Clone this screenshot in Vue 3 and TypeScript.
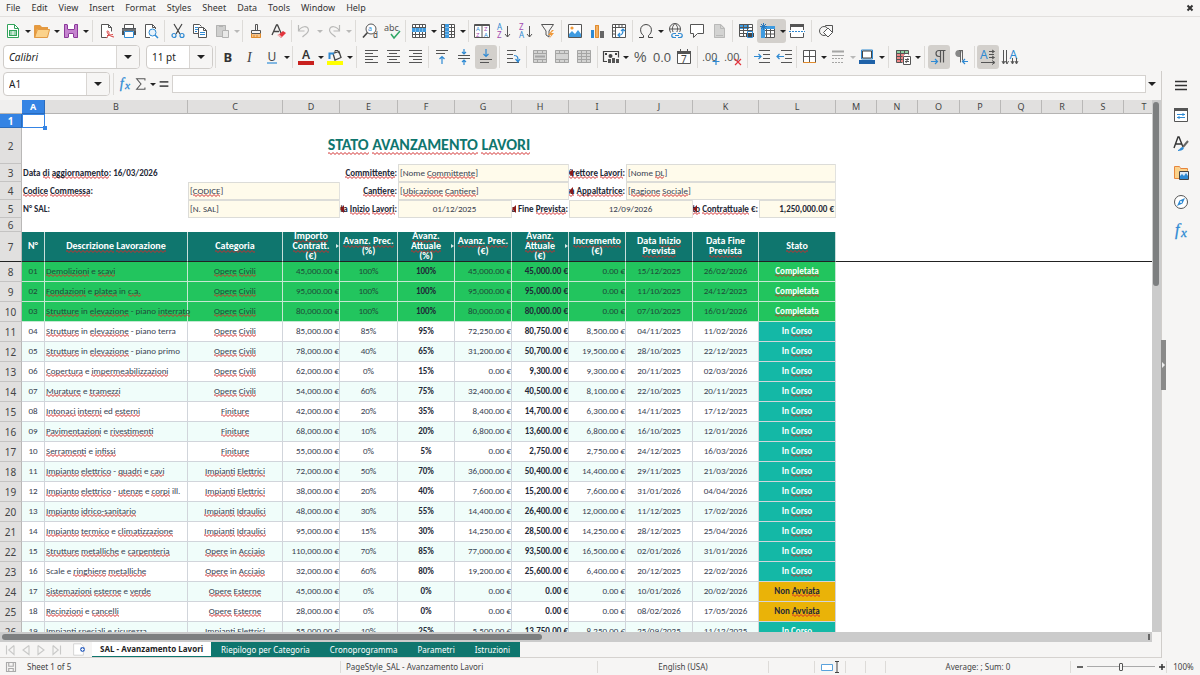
<script setup lang="ts">
import { computed, h, ref } from 'vue'

type Tool = { sep?: 'thin' | 'mid' | 'wide'; icon?: string; label?: string; menu?: boolean; on?: boolean; off?: boolean }

const t = (icon: string, label: string, extra: Partial<Tool> = {}): Tool => ({ icon, label, ...extra })
const thin: Tool = { sep: 'thin' }
const mid: Tool = { sep: 'mid' }
const wide: Tool = { sep: 'wide' }
const menu = { menu: true }

const menus = ['File', 'Edit', 'View', 'Insert', 'Format', 'Styles', 'Sheet', 'Data', 'Tools', 'Window', 'Help']

const standard: Tool[] = [
  t('new', 'New', menu), t('open', 'Open', menu), t('save', 'Save', menu), wide,
  t('pdf', 'Export as PDF'), t('print', 'Print'), t('preview', 'Print Preview'), mid,
  t('cut', 'Cut'), t('copy', 'Copy'), t('paste', 'Paste', { menu: true, off: true }), mid,
  t('brush', 'Clone Formatting'), t('clear', 'Clear Formatting'), mid,
  t('undo', 'Undo', { menu: true, off: true }), t('redo', 'Redo', { menu: true, off: true }), wide,
  t('find', 'Find and Replace'), t('spell', 'Spelling'), mid,
  t('rows', 'Row', menu), t('cols', 'Column', menu), mid,
  t('sort', 'Sort'), t('asc', 'Sort Ascending'), t('desc', 'Sort Descending'), t('filter', 'AutoFilter'), mid,
  t('image', 'Insert Image'), t('chart', 'Insert Chart'), t('pivot', 'Pivot Table'), mid,
  t('omega', 'Special Character', menu), t('link', 'Hyperlink'), t('comment', 'Comment'), t('page', 'Headers and Footers', { off: true }), mid,
  t('printarea', 'Define Print Area'), t('freeze', 'Freeze Rows and Columns', { menu: true, on: true }), t('split', 'Split Window'), wide,
  t('shapes', 'Show Draw Functions'),
]

const formatting: Tool[] = [
  thin, t('bold', 'Bold'), t('italic', 'Italic'), t('under', 'Underline', menu), mid,
  t('color', 'Font Color', menu), t('hilite', 'Background Color', menu), wide,
  t('left', 'Align Left'), t('center', 'Align Center'), t('right', 'Align Right'), mid,
  t('top', 'Align Top'), t('middle', 'Center Vertically'), t('bottom', 'Align Bottom', { on: true }), mid,
  t('wrap', 'Wrap Text'), mid,
  t('merge', 'Merge and Center'), t('merge2', 'Merge Cells'), t('merge3', 'Unmerge Cells'), mid,
  t('money', 'Currency', menu), t('percent', 'Percent'), t('number', 'Number'), t('date', 'Date'), mid,
  t('adddec', 'Add Decimal Place'), t('deldec', 'Delete Decimal Place'), wide,
  t('indent', 'Increase Indent'), t('outdent', 'Decrease Indent'), thin,
  t('borders', 'Borders', menu), t('bstyle', 'Border Style', { menu: true, off: true }), t('bcolor', 'Border Color', menu), wide,
  t('cond', 'Conditional', menu), wide,
  t('ltr', 'Left-To-Right', { on: true }), t('rtl', 'Right-To-Left'), mid,
  t('thoriz', 'Text Direction Horizontal', { on: true }), t('tvert', 'Text Direction Vertical'),
]

const g = '#555'
const b = '#2f8ad3'
const line = (d: string, c = g, w = 1) => `<path d="${d}" fill="none" stroke="${c}" stroke-width="${w}"/>`
const fill = (d: string, c: string) => `<path d="${d}" fill="${c}"/>`
const txt = (x: number, y: number, s: string, size: number, c: string, extra = '') =>
  `<text x="${x}" y="${y}" font-size="${size}" fill="${c}" font-family="Noto Sans, sans-serif" ${extra}>${s}</text>`
const digits = (x: number, y: number, s: string, size: number) =>
  `<text x="${x}" y="${y}" font-size="${size}" fill="#555" font-family="Liberation Sans, sans-serif">${s}</text>`
const grid = line('M1.5 1.5h13v13h-13zM1.5 4.5h13M1.5 8.5h13M1.5 11.5h13M4.5 1.5v13M8.5 1.5v13M11.5 1.5v13')
const merged = fill('M1 1h14v13H1z', '#d4d4d3') + line('M1.5 1.5h13v12h-13zM1.5 4.5h13M1.5 10.5h13M5.5 1.5v3M10.5 1.5v3M5.5 10.5v3M10.5 10.5v3', '#a5a5a4')

const icons: Record<string, string> = {
  new: fill('M2 1h8l4 4v10H2z', '#fff') + line('M2.5 1.5h7l4 4v9h-11zM9.5 1.5v4h4', '#31a35a') + fill('M4 7h8v6H4z', '#31a35a') + line('M5 9h6M5 11h6M8 8v4', '#fff'),
  open: fill('M1 2h5l2 2h6v10H1z', '#e79a3c') + fill('M3 6h13l-3 9H1z', '#fbd28b') + line('M.5 14.5v-12h5l2 2h6v2M.5 14.5l3-8h12l-2 8z', '#e29a45'),
  save: fill('M1 1h14v14H1z', '#c583cf') + line('M1.5 1.5h13v13h-13z', '#8c3a9a') + fill('M4 1h8v6H4zM5 10h6v5H5z', '#fff') + line('M4.5 1.5v5h7v-5M5.5 14.5v-4h5v4', '#8c3a9a'),
  pdf: fill('M3 1h7l3 3v11H3z', '#fff') + line('M8.5 14.5h-6v-13h7l3 3v4M9.5 1.5v3h3') + line('M7 15c3-2 4-6 2-7s-1 5 6 6M8 12.500l6-1', '#d84343'),
  print: fill('M3 1h10v4H3z', '#fff') + line('M3.500 5v-3.500h9V5') + fill('M1 5h14v7H1z', '#4f5357') + fill('M3 8h10v7H3z', '#fff') + line('M3.5 8.500h9v6h-9z', b) + line('M1 7h14', '#8a8d90'),
  preview: fill('M2 1h8l3 3v11H2z', '#fff') + line('M7 14.5H2.500v-13h7l3 3V6M9.5 1.5v3h3') + `<circle cx="9.500" cy="9.500" r="3.500" fill="#e7f2fb" stroke="${b}"/>` + line('M12 12l3 3', b, 1.5),
  cut: line('M4 1l6 10M12 1L6 11', '#444', 1.2) + `<circle cx="4" cy="12.500" r="2" fill="none" stroke="${b}" stroke-width="1.200"/><circle cx="12" cy="12.500" r="2" fill="none" stroke="${b}" stroke-width="1.200"/>`,
  copy: fill('M2 1h7v10H2z', '#fff') + line('M6 10.500H1.500v-9h6l2 2') + line('M3 4.500h3M3 6.500h3M3 8.500h2', b) + fill('M6 5h6l3 3v7H6z', '#fff') + line('M6.500 4.500h5l3 3v7h-8zM11.500 4.500v3h3') + line('M8 9.500h5M8 11.500h5', b),
  paste: fill('M2 2h10v12H2z', '#cfcfce') + line('M2.500 2.500h9v11h-9zM5 3.500h4', '#b3b3b2') + fill('M8 7h7v8H8z', '#e9e9e8') + line('M8.500 7.500h6v7h-6z', '#b3b3b2'),
  brush: line('M7.500 1.500h2v6h-2zM3.500 7.500h9v3h-9z') + fill('M3 11h10v4H3z', '#f6c48a') + line('M3.500 10.500v4h9v-4M6 14v-2M9 14v-2', '#e08b2d'),
  clear: line('M2 12L6.500 2h1L11 10M4 8.500h5', '#444', 1.3) + fill('M8 12l5-4 3 2-5 5z', '#e2343c') + fill('M7 12l2-1 3 3-1 1z', '#f3b7b9'),
  undo: line('M1.500 2v6h6M1.500 8C4 3 11 2 11.500 7c0 3-4 5-6 7', '#b9b9b8', 1.2),
  redo: line('M13.500 2v6h-6M13.500 8C11 3 4 2 3.500 7c0 3 4 5 6 7', '#b9b9b8', 1.2),
  find: `<circle cx="9" cy="6" r="5" fill="#fff" stroke="${g}"/>` + line('M5.500 9.500L1 14.500', '#444', 1.6) + txt(6, 8, 'a', 7, b) + txt(11, 15, 'd', 8, '#444'),
  spell: txt(0, 8, 'abc', 9, '#555') + line('M7 11l3 4 6-7', '#2fa765', 1.5),
  rows: fill('M1 1h14v14H1z', '#fff') + grid + fill('M1 5h14v4H1z', '#3f9be0') + line('M4.500 5v4M8.500 5v4M11.500 5v4', '#7fbce9'),
  cols: fill('M1 1h14v14H1z', '#fff') + grid + fill('M5 1h4v14H5z', '#3f9be0') + line('M5 4.500h4M5 8.500h4M5 11.500h4', '#7fbce9'),
  sort: fill('M1 1h14v14H1z', '#fff') + line('M.5 1.500h15v13H.5zM8 2v13M.5 2.500h15') + txt(2, 8, 'A', 6, b) + txt(2, 14, 'Z', 6, '#a34bb0') + txt(10, 8, 'Z', 6, '#a34bb0') + txt(10, 14, 'A', 6, b),
  asc: txt(1, 7, 'A', 8, b) + txt(1, 15, 'Z', 8, '#a34bb0') + line('M11.500 3v11M9 11l2.500 3L14 11'),
  desc: txt(1, 7, 'Z', 8, '#a34bb0') + txt(1, 15, 'A', 8, b) + line('M11.500 3v11M9 11l2.500 3L14 11'),
  filter: line('M1.500 1.500h12L9 8v6l-3-2V8z') + fill('M12 7L8 12h3l-2 4 5-6h-3l3-3z', '#f0993a'),
  image: fill('M1 1h14v14H1z', '#fff') + fill('M2 14v-3l3-3 3 3 3-4 3 4v3z', '#3f9be0') + line('M1.500 1.500h13v13h-13z') + `<circle cx="5" cy="5" r="1.600" fill="#f0993a"/>`,
  chart: fill('M2 7h3v8H2z', b) + fill('M6 2h4v13H6z', '#f3b267') + line('M6.500 2.500h3v12h-3z', '#e08b2d') + fill('M11 8h4v7h-4z', '#666'),
  pivot: fill('M1 1h14v14H1z', '#fff') + line('M1.500 1.500h13v13h-13zM1.500 4.500h13M4.500 1.500v13M8 1.500v3M11 1.500v3M1.500 8h3M1.500 11h3') + line('M7 12c4 1 5-2 5-5M10 8l2-2 2 2M9 10l-2 2 2 2', b, 1.200),
  omega: line('M1 14.500h4.500v-2C1.500 10 1 2 8 1.500 15 2 14.500 10 10.500 12.500v2H15', '#444'),
  link: `<circle cx="8" cy="6" r="5.500" fill="none" stroke="${g}"/>` + line('M2.500 6h11M8 .5C4 4 5 9 8 11.500M8 .5c4 3.500 3 8 0 11') + fill('M4 9h12v7H4z', '#f6f5f4') + line('M9 10.500H7c-3 0-3 4 0 4h2M11 10.500h2c3 0 3 4 0 4h-2M8 12.500h4', b, 1.200),
  comment: fill('M2 2h13v9H2z', '#fff') + line('M1.500 1.500h13v9h-6l-4 4v-4h-3z'),
  page: fill('M3 1h7l4 4v10H3z', '#d3d3d2') + line('M3.500 1.500h6l4 4v9h-10zM9.500 1.500v4h4M5 12.500h7', '#b9b9b8'),
  printarea: fill('M1 1h13v11H1z', '#fff') + fill('M1 1h10v5H1z', '#3f9be0') + line('M1.500 1.500h13M1.500 4.500h13M1.500 7.500h13M1.500 10.500h7M1.500 1.500v12h6M5.500 1.500v12M9.500 1.500v6M14.500 1.500v7') + fill('M8 10h8v4H8z', '#444') + line('M9.500 8.500h5v6h-5z', b),
  freeze: fill('M2 3h13v12H2z', '#fff') + line('M2.500 4.500h12v10h-12zM2 7.500h13M2 11h13M6.500 4v11M10.500 4v11') + fill('M1 4h4v11H1zM5 3h10v3H5z', '#3f9be0') + line('M3.500 0v7M0 3.500h7M1 1l5 5M6 1L1 6', '#2878bd'),
  split: fill('M2 1h13v14H2z', '#fff') + line('M1.500 7V1.500h13V7M1.500 10v4.500h13V10') + fill('M1 1h14v3H1z', '#555') + `<path d="M0 8.500h16" stroke="${b}" stroke-dasharray="2 1"/>`,
  shapes: `<circle cx="6" cy="8" r="4.500" fill="none" stroke="${g}"/>` + line('M7.500 3.500v-1h7v7h-1') + fill('M10 5l4.500 4.500L10 14 5.500 9.500z', '#fff') + line('M10 5l4.500 4.500L10 14 5.500 9.500z'),
  bold: txt(3.5, 13, 'B', 13, '#333', 'font-weight="700"'),
  italic: `<text x="5" y="13" font-size="14" fill="#444" font-family="Liberation Serif, serif" font-style="italic">I</text>`,
  under: txt(3.5, 11.5, 'U', 12, '#444') + line('M3 14h10', '#5aa2dc', 1.500),
  color: txt(4, 10, 'A', 12, '#333', 'font-weight="600"') + fill('M0 12h16v4H0z', '#c9211e'),
  hilite: line('M6 4.500l6-2 2 6-6 2.500z', '#444', 1.300) + line('M2.500 10V4.500H7', b, 2) + line('M8 4V1.500h3l1 3', '#444') + fill('M0 12h16v4H0z', '#ffff00'),
  left: line('M2 1.500h13M2 4.500h8M2 7.500h13M2 10.500h8M2 13.500h13'),
  center: line('M2 1.500h13M4 4.500h8M2 7.500h13M4 10.500h8M2 13.500h13'),
  right: line('M2 1.500h13M6 4.500h9M2 7.500h13M6 10.500h9M2 13.500h13'),
  top: line('M2 1.500h12M2 4.500h9') + line('M8 15V7.500M5.500 10L8 7.500l2.500 2.500', b, 1.200),
  middle: line('M2 6.500h12M2 9.500h12') + line('M8 0v5M6 3l2 2 2-2M8 16v-5M6 13l2-2 2 2', b, 1.200),
  bottom: line('M2 10.500h12M2 13.500h9') + line('M8 0v7M5.500 5L8 7.500 10.500 5', b, 1.200),
  wrap: line('M2 1.500h9M2 5.500h6M2 9.500h6M2 13.500h12') + line('M9 6.500c4 0 4 2 4 6M10.500 10l2.500 3 2-3', b, 1.200),
  merge: merged + line('M3 7.500h10', '#a5a5a4', 2),
  merge2: merged,
  merge3: merged + line('M5.500 4v7M10.500 4v7M2 7.500h13', '#a5a5a4'),
  money: line('M4 12.500H.5v-10h15v6', '#444', 1.200) + `<circle cx="7.500" cy="7" r="2" fill="#444"/>` + fill('M5 14v-4h3v4zM9 14V9h3v5zM13 14v-4h3v4z', '#555') + fill('M2 4h2v2H2zM12 4h2v2h-2z', '#444'),
  percent: digits(2, 13, '%', 14),
  number: digits(-1, 13, '0.0', 13),
  date: fill('M1 3h14v12H1z', '#fff') + line('M1.500 2.500h13v12h-13zM4.500 0v4M11.500 0v4') + fill('M1 2h14v3H1z', '#555') + txt(5, 14, '7', 10, '#444'),
  adddec: digits(-1, 12, '.00', 11) + line('M13 9v7M9.500 12.500h7', b, 1.200),
  deldec: digits(-1, 12, '.00', 11) + line('M10 10l6 6M16 10l-6 6', '#e2343c', 1.200),
  indent: line('M5 1.500h11M9 5.500h7M9 9.500h7M5 13.500h11') + line('M0 7.500h7M4.500 5L7 7.500 4.500 10', b, 1.200),
  outdent: line('M5 1.500h11M9 5.500h7M9 9.500h7M5 13.500h11') + line('M1 7.500h7M3.500 5L1 7.500 3.500 10', b, 1.200),
  borders: fill('M2 1h13v13H2z', '#fff') + line('M2.500 1.500h12v12h-12zM8.500 1.500v12M2.500 7.500h12') + line('M2 13.500h13', '#e08b2d'),
  bstyle: line('M2 2.500h12', '#a5a5a4', 2) + line('M2 6.500h12', '#a5a5a4') + `<path d="M2 9.500h12M2 13.500h12" stroke="#a5a5a4" stroke-dasharray="2 1"/>`,
  bcolor: fill('M3 1h11v8H3z', '#fff') + line('M2.500 1h11v9h-11z', b) + line('M3.500 2h9v7h-9z', '#444') + fill('M0 11h16v4H0z', '#1f62a8'),
  cond: fill('M1 1h12v12H1z', '#fff') + fill('M1 1h12v3H1z', '#8fd3a6') + fill('M1 5h8v8H1z', '#e88') + line('M1.500 1.500h12v4M1.500 1.500v12h6M1.500 4.500h12M1.500 7.500h6M1.500 10.500h6M5.500 1.500v12M9.500 1.500v4') + fill('M8 7h8v9H8z', '#fff') + line('M8.500 7.500h7v8h-7zM10 10.500h4M10 12.500h4M13 9l-2 5'),
  ltr: line('M14.500 1.500H8c-4 0-4 6 0 6h1M9.500 1.500v12M12.500 1.500v12', '#555', 1.200) + line('M0 12.500h6M4 10l2.500 2.500L4 15', b, 1.200),
  rtl: fill('M9 1H6C1 1 1 8 6 8h1z', '#888') + line('M10 1.500H6M7.500 1.500v12M9.500 1.500v10', '#666') + line('M15 12.500h-5M12 10l-2.500 2.500L12 15', b, 1.200),
  thoriz: txt(0, 10, 'A', 12, b) + line('M9 2.500h5M9 5.500h5M9 8.500h5M1 13.500h13M12 1l2.500 1.500L12 4M12 7l2.500 1.500L12 10M12 11.500l3 2-3 2'),
  tvert: txt(7.5, 10, 'A', 12, b) + line('M1.500 1v13M4.500 1v13M10.500 9v5M14.500 9v5M0 12l1.500 3L3 12M3.500 12L5 15l1.500-3M9 12l1.500 3 1.500-3M13 12l1.500 3 1.500-3'),
  burger: line('M2 3.500h12M2 7.500h12M2 11.500h12', '#333', 1.500),
  props: fill('M1 1h14v14H1z', '#fff') + line('M1.500 1.500h13v13h-13z') + fill('M1 1h14v3H1z', '#555') + line('M4 7.500h8M10 6v3M4 10.500h8M6 9v3', b),
  styles: line('M1 12L5 1h1l4 10M3 8h6', '#333', 1.400) + line('M15 5l-5 6', '#666', 2) + fill('M5 14c2 0 2-3 5-3 2 1 0 4-5 4z', b),
  gallery: fill('M1 2h5l1 2h8v9H1z', '#fbd28b') + line('M1.500 13.500v-12h5l1 2h7v2M1.500 13.500h5', '#e7863c') + fill('M6 6h9v9H6z', '#dcebf8') + fill('M7 14v-3l2-2 2 2 2-3 2 3v3z', b) + line('M6.500 6.500h9v8h-9z', '#444'),
  navigator: `<circle cx="8" cy="8" r="6.500" fill="#fff" stroke="${g}"/>` + fill('M12 4L9.500 9.500 4 12l2.500-5.500z', b) + `<circle cx="8" cy="8" r="1" fill="#fff"/>`,
  fx: `<text x="2" y="12" font-size="16" fill="${b}" stroke="${b}" stroke-width=".3" font-family="Liberation Serif, serif" font-style="italic">f</text><text x="8" y="14" font-size="13" fill="${b}" stroke="${b}" stroke-width=".3" font-family="Liberation Serif, serif" font-style="italic">x</text>`,
  sigma: line('M12.500 4V2H3l5 6-5 6h9.500v-2', '#555', 1.200),
  equals: line('M3 5.500h10M3 10.500h10', '#555', 2),
}

const sidebar = [
  { icon: 'burger', label: 'Sidebar Settings' },
  { icon: 'props', label: 'Properties' },
  { icon: 'styles', label: 'Styles' },
  { icon: 'gallery', label: 'Gallery' },
  { icon: 'navigator', label: 'Navigator' },
  { icon: 'fx', label: 'Functions' },
]

const columns = [
  ['A', 23], ['B', 143], ['C', 95], ['D', 57], ['E', 58], ['F', 57], ['G', 57], ['H', 57], ['I', 57], ['J', 67], ['K', 66], ['L', 77],
  ['M', 41], ['N', 41], ['O', 42], ['P', 41], ['Q', 41], ['R', 41], ['S', 41], ['T', 41],
] as [string, number][]

// Words present in the active English dictionary; every other word gets the spelling mark.
const known = new Set(['data', 'fine', 'nome', 'n', 'sal', 'scale', 'non', 'in', 'e', 'ed', 'piano', 'terra', 'primo', 'ill.'])
const Words = (p: { text: string }) =>
  h('span', p.text.split(/([A-Za-z][A-Za-z.\-]*)/).filter(Boolean).map((s) =>
    /^[A-Za-z]/.test(s) && !known.has(s.toLowerCase()) ? h('span', { class: 'misspelt' }, s) : s,
  ))
Words.props = ['text']

const heads = [
  { lines: ['N°'] }, { lines: ['Descrizione Lavorazione'] }, { lines: ['Categoria'] },
  { lines: ['Importo', 'Contratt.', '(€)'], more: true }, { lines: ['Avanz. Prec.', '(%)'] },
  { lines: ['Avanz.', 'Attuale', '(%)'], more: true }, { lines: ['Avanz. Prec.', '(€)'] },
  { lines: ['Avanz.', 'Attuale', '(€)'], more: true }, { lines: ['Incremento', '(€)'] },
  { lines: ['Data Inizio', 'Prevista'] }, { lines: ['Data Fine', 'Prevista'] }, { lines: ['Stato'] },
]

const raw = `Demolizioni e scavi|Opere Civili|45000|100|100|15/12/2025|26/02/2026
Fondazioni e platea in c.a.|Opere Civili|95000|100|100|11/10/2025|24/12/2025
Strutture in elevazione - piano interrato|Opere Civili|80000|100|100|07/10/2025|16/01/2026
Strutture in elevazione - piano terra|Opere Civili|85000|85|95|04/11/2025|11/02/2026
Strutture in elevazione - piano primo|Opere Civili|78000|40|65|28/10/2025|22/12/2025
Copertura e impermeabilizzazioni|Opere Civili|62000|0|15|20/11/2025|02/03/2026
Murature e tramezzi|Opere Civili|54000|60|75|22/10/2025|20/11/2025
Intonaci interni ed esterni|Finiture|42000|20|35|14/11/2025|17/12/2025
Pavimentazioni e rivestimenti|Finiture|68000|10|20|16/10/2025|12/01/2026
Serramenti e infissi|Finiture|55000|0|5|24/12/2025|16/03/2026
Impianto elettrico - quadri e cavi|Impianti Elettrici|72000|50|70|29/11/2025|21/03/2026
Impianto elettrico - utenze e corpi ill.|Impianti Elettrici|38000|20|40|31/01/2026|04/04/2026
Impianto idrico-sanitario|Impianti Idraulici|48000|30|55|11/12/2025|17/02/2026
Impianto termico e climatizzazione|Impianti Idraulici|95000|15|30|28/12/2025|25/04/2026
Strutture metalliche e carpenteria|Opere in Acciaio|110000|70|85|02/01/2026|31/01/2026
Scale e ringhiere metalliche|Opere in Acciaio|32000|60|80|20/12/2025|22/02/2026
Sistemazioni esterne e verde|Opere Esterne|45000|0|0|10/01/2026|20/02/2026
Recinzioni e cancelli|Opere Esterne|28000|0|0|08/02/2026|17/05/2026
Impianti speciali e sicurezza|Impianti Elettrici|55000|10|25|25/09/2025|11/12/2025`

const euro = (n: number) => n.toLocaleString('en-US', { minimumFractionDigits: 2 }) + ' €'
const works = computed(() =>
  raw.split('\n').map((row, i) => {
    const [name, cat, amount, prev, cur, start, end] = row.split('|')
    const a = Number(amount)
    const before = (a * Number(prev)) / 100
    const now = (a * Number(cur)) / 100
    const state = cur === '100' ? 'done' : cur === '0' ? 'idle' : 'going'
    return {
      row: i + 8, no: String(i + 1).padStart(2, '0'), name, cat, amount: euro(a), prev: prev + '%', cur: cur + '%',
      before: euro(before), now: euro(now), diff: euro(now - before), start, end, state,
      label: { done: 'Completata', idle: 'Non Avviata', going: 'In Corso' }[state],
    }
  }),
)

const steps = [
  { label: 'First sheet', d: 'M2 2v12M12 2L5 8l7 6V2' },
  { label: 'Previous sheet', d: 'M12 2L4 8l8 6V2' },
  { label: 'Next sheet', d: 'M4 2l8 6-8 6V2' },
  { label: 'Last sheet', d: 'M14 2v12M4 2l7 6-7 6V2' },
]
const tabs = ['SAL - Avanzamento Lavori', 'Riepilogo per Categoria', 'Cronoprogramma', 'Parametri', 'Istruzioni']
const active = ref(0)
const font = ref('Calibri')
const size = ref('11 pt')
const cellName = ref('A1')
const formula = ref('')
const zoom = ref(100)
</script>

<template>
  <div class="app">
    <nav class="menubar">
      <button v-for="m in menus" :key="m" type="button">{{ m }}</button>
      <button class="close" type="button" aria-label="Close document">
        <svg viewBox="0 0 8 8"><path d="M1.500 1.500l5 5M6.500 1.500l-5 5" stroke="#333" stroke-width="2" /></svg>
      </button>
    </nav>

    <div class="toolbar upper">
      <template v-for="(x, i) in standard" :key="i">
        <span v-if="x.sep" class="sep" :class="x.sep"></span>
        <span v-else class="tool" :class="{ on: x.on, off: x.off }">
          <button type="button" :aria-label="x.label"><svg viewBox="0 0 16 16" v-html="icons[x.icon!]"></svg></button>
          <button v-if="x.menu" class="drop" type="button" :aria-label="x.label + ' options'"><i></i></button>
        </span>
      </template>
    </div>

    <div class="toolbar lower">
      <span class="combo font">
        <select v-model="font" aria-label="Font name"><option>Calibri</option></select><span><i></i></span>
      </span>
      <span class="combo size">
        <select v-model="size" aria-label="Font size"><option>11 pt</option></select><span><i></i></span>
      </span>
      <template v-for="(x, i) in formatting" :key="i">
        <span v-if="x.sep" class="sep" :class="x.sep"></span>
        <span v-else class="tool" :class="{ on: x.on, off: x.off }">
          <button type="button" :aria-label="x.label"><svg viewBox="0 0 16 16" v-html="icons[x.icon!]"></svg></button>
          <button v-if="x.menu" class="drop" type="button" :aria-label="x.label + ' options'"><i></i></button>
        </span>
      </template>
    </div>

    <div class="body">
      <main>
        <div class="formula">
          <span class="combo name">
            <select v-model="cellName" aria-label="Name box"><option>A1</option></select><span><i></i></span>
          </span>
          <span class="sep wide"></span>
          <button class="fx" type="button" aria-label="Function Wizard"><svg viewBox="0 0 16 16" v-html="icons.fx"></svg></button>
          <button class="fx" type="button" aria-label="Select Function"><svg viewBox="0 0 16 16" v-html="icons.sigma"></svg></button>
          <button class="drop" type="button" aria-label="Function options"><i></i></button>
          <button class="fx" type="button" aria-label="Formula"><svg viewBox="0 0 16 16" v-html="icons.equals"></svg></button>
          <input v-model="formula" type="text" aria-label="Input line" />
          <button class="expand" type="button" aria-label="Expand Formula Bar"><i></i></button>
        </div>

        <div class="view">
          <div class="sheet">
            <table>
              <colgroup>
                <col class="rowcol" />
                <col v-for="c in columns" :key="c[0]" :style="{ width: c[1] + 'px' }" />
              </colgroup>
              <thead>
                <tr class="letters">
                  <td class="corner"></td>
                  <th v-for="c in columns" :key="c[0]" scope="col" :class="{ sel: c[0] === 'A' }">{{ c[0] }}</th>
                </tr>
              </thead>
              <tbody>
                <tr class="h14"><th class="sel">1</th><td class="cursor"></td><td colspan="19"></td></tr>
                <tr class="h36">
                  <th>2</th>
                  <td colspan="12" class="title"><Words text="STATO AVANZAMENTO LAVORI" /></td>
                  <td colspan="8"></td>
                </tr>
                <tr class="h18">
                  <th>3</th>
                  <td colspan="3" class="lab"><Words text="Data di aggiornamento: 16/03/2026" /></td>
                  <td></td>
                  <td class="lab r"><div><Words text="Committente:" /></div></td>
                  <td colspan="3" class="box"><Words text="[Nome Committente]" /></td>
                  <td class="lab r cut"><div><Words text="Direttore Lavori:" /></div></td>
                  <td colspan="3" class="box"><Words text="[Nome DL]" /></td>
                  <td colspan="8"></td>
                </tr>
                <tr class="h18">
                  <th>4</th>
                  <td colspan="2" class="lab"><Words text="Codice Commessa:" /></td>
                  <td colspan="2" class="box"><Words text="[CODICE]" /></td>
                  <td class="lab r"><div><Words text="Cantiere:" /></div></td>
                  <td colspan="3" class="box"><Words text="[Ubicazione Cantiere]" /></td>
                  <td class="lab r cut"><div><Words text="Impresa Appaltatrice:" /></div></td>
                  <td colspan="3" class="box"><Words text="[Ragione Sociale]" /></td>
                  <td colspan="8"></td>
                </tr>
                <tr class="h18">
                  <th>5</th>
                  <td colspan="2" class="lab">N° SAL:</td>
                  <td colspan="2" class="box">[N. SAL]</td>
                  <td class="lab r cut"><div><Words text="Data Inizio Lavori:" /></div></td>
                  <td colspan="2" class="box mid">01/12/2025</td>
                  <td class="lab r cut"><div><Words text="Data Fine Prevista:" /></div></td>
                  <td colspan="2" class="box mid">12/09/2026</td>
                  <td class="lab r cut"><div><Words text="Importo Contrattuale €:" /></div></td>
                  <td class="box sum">1,250,000.00 €</td>
                  <td colspan="8"></td>
                </tr>
                <tr class="h14"><th>6</th><td colspan="20"></td></tr>
                <tr class="heads">
                  <th>7</th>
                  <td v-for="(c, i) in heads" :key="i" class="head" :class="{ more: c.more }">
                    <div><p v-for="l in c.lines" :key="l"><Words :text="l" /></p></div>
                  </td>
                  <td colspan="8"></td>
                </tr>
                <tr v-for="w in works" :key="w.no" class="work" :class="[w.state, { tint: w.row % 2 === 0 }]">
                  <th>{{ w.row }}</th>
                  <td class="mid">{{ w.no }}</td>
                  <td class="desc"><Words :text="w.name" /></td>
                  <td class="mid"><Words :text="w.cat" /></td>
                  <td class="num">{{ w.amount }}</td>
                  <td class="mid">{{ w.prev }}</td>
                  <td class="mid strong">{{ w.cur }}</td>
                  <td class="num">{{ w.before }}</td>
                  <td class="num strong">{{ w.now }}</td>
                  <td class="num">{{ w.diff }}</td>
                  <td class="mid">{{ w.start }}</td>
                  <td class="mid">{{ w.end }}</td>
                  <td class="mid state"><Words :text="w.label" /></td>
                  <td colspan="8" class="blank"></td>
                </tr>
              </tbody>
            </table>
          </div>
          <div class="vbar"><div></div></div>
          <div class="hbar"><div></div><i></i></div>
        </div>

        <div class="tabs">
          <div class="navs">
            <button v-for="s in steps" :key="s.label" type="button" :aria-label="s.label">
              <svg viewBox="0 0 16 16"><path :d="s.d" fill="none" stroke="#c9c9c8" stroke-width="1.500" /></svg>
            </button>
          </div>
          <button class="add" type="button" aria-label="Add sheet">
            <svg viewBox="0 0 16 16"><path d="M2 1h9l3 3v11H2z" fill="#fff" stroke="#ccc" /><circle cx="13" cy="8" r="3" fill="#3465c0" /><path d="M13 6v4M11 8h4" stroke="#fff" /></svg>
          </button>
          <button v-for="(n, i) in tabs" :key="n" class="tab" :class="{ active: active === i }" type="button" @click="active = i">{{ n }}</button>
        </div>
      </main>

      <aside>
        <button v-for="s in sidebar" :key="s.icon" type="button" :aria-label="s.label"><svg viewBox="0 0 16 16" v-html="icons[s.icon]"></svg></button>
        <button class="grip" type="button" aria-label="Hide sidebar"><svg viewBox="0 0 4 8"><path d="M1 1l3 3-3 3z" fill="#eee" /></svg></button>
      </aside>
    </div>

    <footer>
      <span class="disk"><svg viewBox="0 0 16 16"><path d="M2 2h12v12H2zM5 2v5h6V2M5 14v-4h6v4" fill="none" stroke="#aaa" stroke-width="1.500" /></svg></span>
      <span>Sheet 1 of 5</span>
      <span>PageStyle_SAL - Avanzamento Lavori</span>
      <span class="mid">English (USA)</span>
      <span></span>
      <span class="mode"><svg viewBox="0 0 20 12"><path d="M1.500 3.500h11v6h-11z" fill="#fff" stroke="#5aa2dc" /><path d="M15 .5h4M15 11.500h4M17 .5v11" stroke="#444" /></svg></span>
      <span></span>
      <span></span>
      <span class="mid">Average: ; Sum: 0</span>
      <span class="zoom">
        <button type="button" aria-label="Zoom out"><svg viewBox="0 0 8 8"><path d="M1 4h6" stroke="#333" stroke-width="1.500" /></svg></button>
        <input v-model="zoom" type="range" min="0" max="200" aria-label="Zoom" />
        <button type="button" aria-label="Zoom in"><svg viewBox="0 0 8 8"><path d="M1 4h6M4 1v6" stroke="#333" stroke-width="1.500" /></svg></button>
      </span>
      <span class="mid percent">{{ zoom }}%</span>
    </footer>
  </div>
</template>

<style>
html, body { margin: 0; height: 100%; overflow: hidden; }
.misspelt { padding-bottom: 1px; background: url("data:image/svg+xml,%3Csvg xmlns='http://www.w3.org/2000/svg' width='4' height='3'%3E%3Cpath d='M-1 2.500L1 .5l2 2 2-2' fill='none' stroke='%23d02a2a'/%3E%3C/svg%3E") repeat-x 0 100%; }
</style>

<style scoped>
.app { display: flex; flex-direction: column; height: 100vh; background: #f6f5f4; color: #444; font: 9px/14px "Noto Sans", sans-serif; }
.app * { box-sizing: border-box; }
button { border: 0; padding: 0; margin: 0; background: none; color: inherit; font: inherit; }
svg { display: block; width: 16px; height: 16px; overflow: visible; }

.menubar { display: flex; gap: 11px; height: 17px; padding: 0 6px; border-bottom: 1px solid #e2e0de; align-items: center; white-space: nowrap; color: #333; }
.close { margin-left: auto; }
.close svg { width: 8px; height: 8px; }

.toolbar { display: flex; align-items: center; height: 27px; padding: 0 2px; }
.upper { padding-top: 1px; }
.lower { padding-bottom: 1px; }
.tool { display: flex; height: 24px; border-radius: 3px; flex: none; }
.tool.on { background: #d3d0cc; }
.tool button:first-child { width: 22px; display: flex; align-items: center; justify-content: center; }
.drop { width: 7px; display: flex; align-items: center; justify-content: center; }
.drop i, .combo i, .expand i { border: 4px solid transparent; border-top: 4px solid #222; border-bottom: 0; }
.drop i { border-width: 3px; border-bottom-width: 0; flex: none; }
.off .drop i { border-top-color: #b9b9b8; }
.sep { flex: none; height: 22px; background: linear-gradient(#dddbd8, #dddbd8) center / 1px 100% no-repeat; }
.thin { width: 3px; }
.mid.sep { width: 5px; }
.wide { width: 7px; }

.combo { display: grid; height: 24px; background: #fff; border: 1px solid #cfccc9; border-radius: 4px; overflow: hidden; flex: none; font-size: 10px; }
.combo select { grid-area: 1 / 1; appearance: none; border: 0; margin: 0; padding: 0 0 0 5px; background: none; font: inherit; color: #222; outline: 0; }
.combo > span { grid-area: 1 / 1; justify-self: end; width: 23px; background: #f6f5f4; border-left: 1px solid #d9d6d3; display: flex; align-items: center; justify-content: center; pointer-events: none; }
.font { width: 137px; margin: 0 6px 0 1px; font-style: italic; }
.size { width: 67px; margin-right: 1px; }
.name { width: 107px; margin-left: 3px; }

.body { flex: 1; min-height: 0; display: flex; }
main { flex: 1; min-width: 0; display: flex; flex-direction: column; }
.formula { display: flex; align-items: center; height: 29px; padding-bottom: 3px; flex: none; }
.fx { width: 16px; display: flex; justify-content: center; }
.fx svg { width: 14px; height: 14px; }
.formula input { flex: 1; min-width: 0; height: 18px; border: 1px solid #d5d2cf; background: #fff; margin: 0; padding: 0 4px; outline: 0; font: inherit; }
.expand { width: 15px; display: flex; padding-left: 2px; }

.view { flex: 1; min-height: 0; display: grid; grid-template: minmax(0, 1fr) 10px / minmax(0, 1fr) 9px; }
.sheet { background: #fff; overflow: hidden; }
.vbar { background: #cbcbcb; padding: 2px 2px 0 1px; }
.vbar div { height: 184px; border-radius: 3px; background: #7d7f80; }
.hbar { background: #cbcbcb; padding: 2px; display: flex; justify-content: space-between; }
.hbar div { width: 47%; border-radius: 3px; background: #7d7f80; }
.hbar i { width: 2px; background: #666; }

table { table-layout: fixed; width: 1108px; border-collapse: separate; border-spacing: 0; font: 9px/12px Carlito, Lato, sans-serif; color: #1f2937; }
.rowcol { width: 22px; }
td, th { padding: 0; white-space: nowrap; overflow: hidden; }
th { font: 10px/12px "Noto Sans", sans-serif; color: #444; background: #e1e0df; border-right: 1px solid #b9b8b7; border-bottom: 1px solid #c4c3c2; text-align: center; }
.letters th, .corner { height: 14px; border-bottom: 1px solid #b5b4b3; }
.letters th { font-size: 9px; }
.corner { background: #f0efee; }
th.sel { background: #3584e4; color: #fff; font-weight: 700; border-color: #2a6cbd; }
.h14 { height: 14px; }
.h18 { height: 18px; }
.h36 { height: 36px; }
.cursor { position: relative; overflow: visible; outline: 1px solid #3584e4; outline-offset: -1px; }
.cursor::after { content: ""; position: absolute; right: -2px; bottom: -2px; width: 4px; height: 4px; background: #3584e4; }
.title { text-align: center; color: #0f766e; font-size: 16px; line-height: 20px; font-weight: 700; padding-bottom: 2px; }
.lab { font-weight: 700; padding-left: 1px; }
.r { padding: 0 1px 0 0; }
.r div { display: flex; justify-content: flex-end; overflow: hidden; }
.cut { position: relative; }
.cut::before { content: ""; position: absolute; left: 0; top: 5px; border: 4px solid transparent; border-left: 0; border-right-color: #8b1a1a; z-index: 1; }
.box { background: #fffbeb; border-right: 1px solid #e2e2df; border-bottom: 1px solid #dcdcd8; box-shadow: inset 1px 1px #dcdcd8; padding-left: 2px; color: #374151; }
.mid { text-align: center; padding: 0; }
.sum { text-align: right; font-weight: 700; padding-right: 1px; color: #1f2937; }

.heads { height: 30px; }
.heads > * { border-bottom: 1px solid #222; }
.head { position: relative; background: #0f766e; color: #fff; border-right: 1px solid #c9dedb; font-size: 10px; font-weight: 700; text-align: center; vertical-align: top; }
.head div { height: 28px; display: flex; flex-direction: column; justify-content: center; overflow: hidden; }
.head p { margin: 0; line-height: 10px; flex: none; }
.more::after { content: ""; position: absolute; right: 0; top: 12px; border: 2px solid transparent; border-left: 3px solid #d8e8e6; border-right: 0; }

.work { height: 20px; }
.work td { border-right: 1px solid #d1d5db; border-bottom: 1px solid #d1d5db; color: #374151; padding-bottom: 1px; }
.work.tint td { background: #f0fdfa; }
.work.done td { background: #22c55e; color: #1f4a38; border-color: #c5e8d2; }
.work .desc { padding-left: 1px; overflow: visible; }
.work .num { text-align: right; }
.work td.strong { font-weight: 700; color: #1f2937; }
.work td.state { font-weight: 700; color: #fff; }
.work.going td.state { background: #14b8a6; }
.work.done td.state { color: #fff; }
.work.idle td.state { background: #eab308; color: #1f2937; }
.work td.blank.blank { background: #fff; border: 0; }

.tabs { display: flex; height: 16px; flex: none; border-bottom: 1px solid #d5d2cf; font-size: 8px; }
.navs { display: flex; padding-left: 5px; align-items: center; }
.navs button { width: 15px; }
.navs svg { width: 12px; height: 12px; }
.add { width: 27px; display: flex; align-items: center; justify-content: center; }
.add svg { width: 13px; height: 13px; }
.tab { background: #0f766e; color: #fff; padding: 0 10px; }
.tab.active { background: #fff; color: #222; font-weight: 700; border-bottom: 1px solid #0f766e; padding: 0 8px; }

aside { position: relative; width: 39px; flex: none; border-left: 1px solid #d0cdca; display: flex; flex-direction: column; align-items: center; gap: 13px; padding-top: 7px; }
aside button { flex: none; }
.grip { position: absolute; left: -1px; top: 269px; width: 5px; height: 50px; background: #8a8a89; display: flex; align-items: center; }
.grip svg { width: 4px; height: 8px; }

footer { display: grid; grid-auto-flow: column; grid-template-columns: 22px 319fr 257fr 171fr 46px 31px 20px 20px 185fr 96px 33px; height: 17px; flex: none; align-items: center; font-size: 8px; }
footer > span { height: 12px; line-height: 12px; border-right: 1px solid #dddbd8; padding-left: 5px; white-space: nowrap; }
footer > span.percent, footer > span.disk { border: 0; }
footer > span.mid { padding: 0; }
.disk svg { width: 12px; height: 12px; }
.mode svg { width: 20px; height: 12px; }
.zoom { display: flex; align-items: center; gap: 3px; }
.zoom svg { width: 8px; height: 8px; }
.zoom input { flex: 1; min-width: 0; margin: 0; height: 10px; appearance: none; background: linear-gradient(#aaa, #aaa) center / 100% 1px no-repeat; }
.zoom input::-webkit-slider-thumb { appearance: none; width: 4px; height: 8px; border: 1px solid #555; border-radius: 1px; background: #f6f5f4; }
</style>
